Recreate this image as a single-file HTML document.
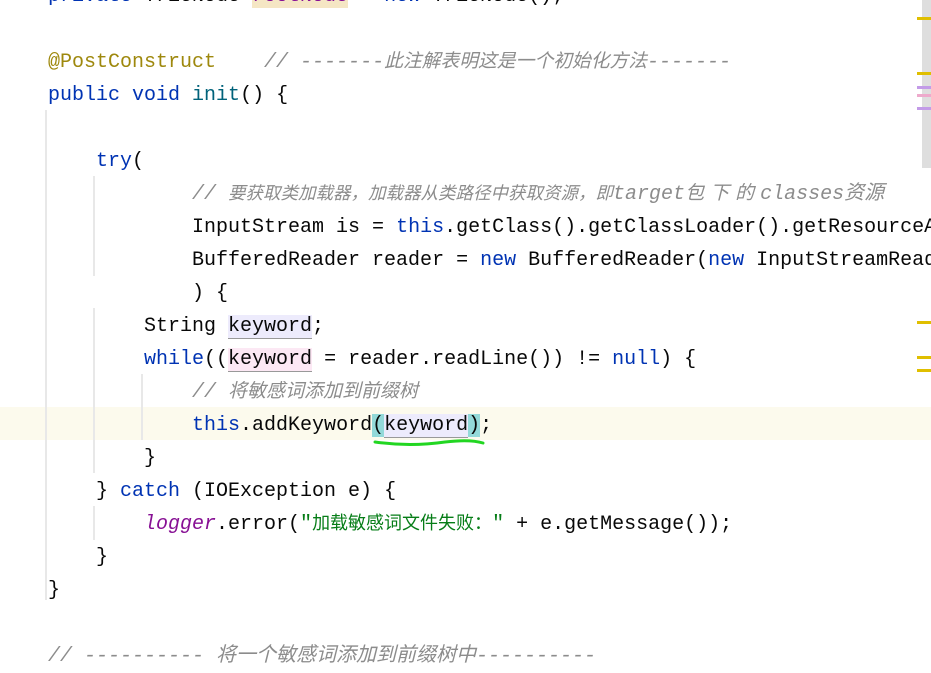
<!DOCTYPE html>
<html><head><meta charset="utf-8"><style>
body{margin:0;width:931px;height:655px;overflow:hidden;background:#fff;position:relative;font-family:"Liberation Mono","Noto Sans CJK SC",monospace;font-size:20px;color:#080808}
.l{position:absolute;left:48px;height:33px;line-height:33px;white-space:pre;overflow:visible}
.k{color:#0033b3}.m{color:#00627a}.a{color:#9e880d}
.c{color:#8c8c8c;font-style:italic}
.s{color:#067d17}.f{color:#871094;font-style:italic}
.z{font-family:"Noto Sans CJK SC",sans-serif;line-height:0}
.v{background:#edebfc;border-bottom:1.5px solid #999}
.w{background:#fce8f4;border-bottom:1.5px solid #999}
.g{position:absolute;width:2px;background:#e8e8e8}
.mk{position:absolute;left:917px;width:14px;height:3px}
</style></head><body>
<div style="position:absolute;left:0;top:407px;width:931px;height:33px;background:#fcfaed"></div>
<div style="position:absolute;left:922px;top:0;width:9px;height:168px;background:#dedede"></div>
<div class="mk" style="top:17px;background:#e0bf00"></div>
<div class="mk" style="top:72px;background:#e0bf00"></div>
<div class="mk" style="top:86px;background:#c39be8"></div>
<div class="mk" style="top:94px;background:#eeaacc"></div>
<div class="mk" style="top:107px;background:#c39be8"></div>
<div class="mk" style="top:321px;background:#e0bf00"></div>
<div class="mk" style="top:356px;background:#e0bf00"></div>
<div class="mk" style="top:369px;background:#e0bf00"></div>
<div class="g" style="left:45px;top:110px;height:490px"></div>
<div class="g" style="left:93px;top:176px;height:100px"></div>
<div class="g" style="left:93px;top:308px;height:165px"></div>
<div class="g" style="left:141px;top:374px;height:66px"></div>
<div class="g" style="left:93px;top:506px;height:34px"></div>

<div class="l" style="top:-20px"><span class="k">private</span> TrieNode <span style="background:#f5e6c4;color:#871094">rootNode</span> = <span class="k">new</span> TrieNode();</div>
<div class="l" style="top:46px"><span class="a">@PostConstruct</span>    <span class="c">// -------<span class="z" style="font-size:18.8px">此注解表明这是一个初始化方法</span>-------</span></div>
<div class="l" style="top:79px"><span class="k">public void</span> <span class="m">init</span>() {</div>
<div class="l" style="top:145px">    <span class="k">try</span>(</div>
<div class="l" style="top:178px">            <span class="c">// <span class="z" style="font-size:17.5px">要获取类加载器，加载器从类路径中获取资源，即</span>target<span class="z" style="font-size:19px;letter-spacing:6px">包下的</span>classes<span class="z">资源</span></span></div>
<div class="l" style="top:211px">            InputStream is = <span class="k">this</span>.getClass().getClassLoader().getResourceAsStream(</div>
<div class="l" style="top:244px">            BufferedReader reader = <span class="k">new</span> BufferedReader(<span class="k">new</span> InputStreamReader(</div>
<div class="l" style="top:277px">            ) {</div>
<div class="l" style="top:310px">        String <span class="v">keyword</span>;</div>
<div class="l" style="top:343px">        <span class="k">while</span>((<span class="w">keyword</span> = reader.readLine()) != <span class="k">null</span>) {</div>
<div class="l" style="top:376px">            <span class="c">// <span class="z" style="font-size:19px">将敏感词添加到前缀树</span></span></div>
<div class="l" style="top:409px">            <span class="k">this</span>.addKeyword<span style="background:#93d9d9">(</span><span class="v">keyword</span><span style="background:#93d9d9">)</span>;</div>
<div class="l" style="top:442px">        }</div>
<div class="l" style="top:475px">    } <span class="k">catch</span> (IOException e) {</div>
<div class="l" style="top:508px">        <span class="f">logger</span>.error(<span class="s">"<span class="z" style="font-size:18px">加载敏感词文件失败：</span>"</span> + e.getMessage());</div>
<div class="l" style="top:541px">    }</div>
<div class="l" style="top:574px">}</div>
<div class="l" style="top:640px"><span class="c">// ---------- <span class="z">将一个敏感词添加到前缀树中</span>----------</span></div>
<svg style="position:absolute;left:370px;top:436px" width="120" height="14"><path d="M5 6 Q40 11 75 6 Q100 3 113 7" stroke="#22d622" stroke-width="3" fill="none" stroke-linecap="round"/></svg>
</body></html>
